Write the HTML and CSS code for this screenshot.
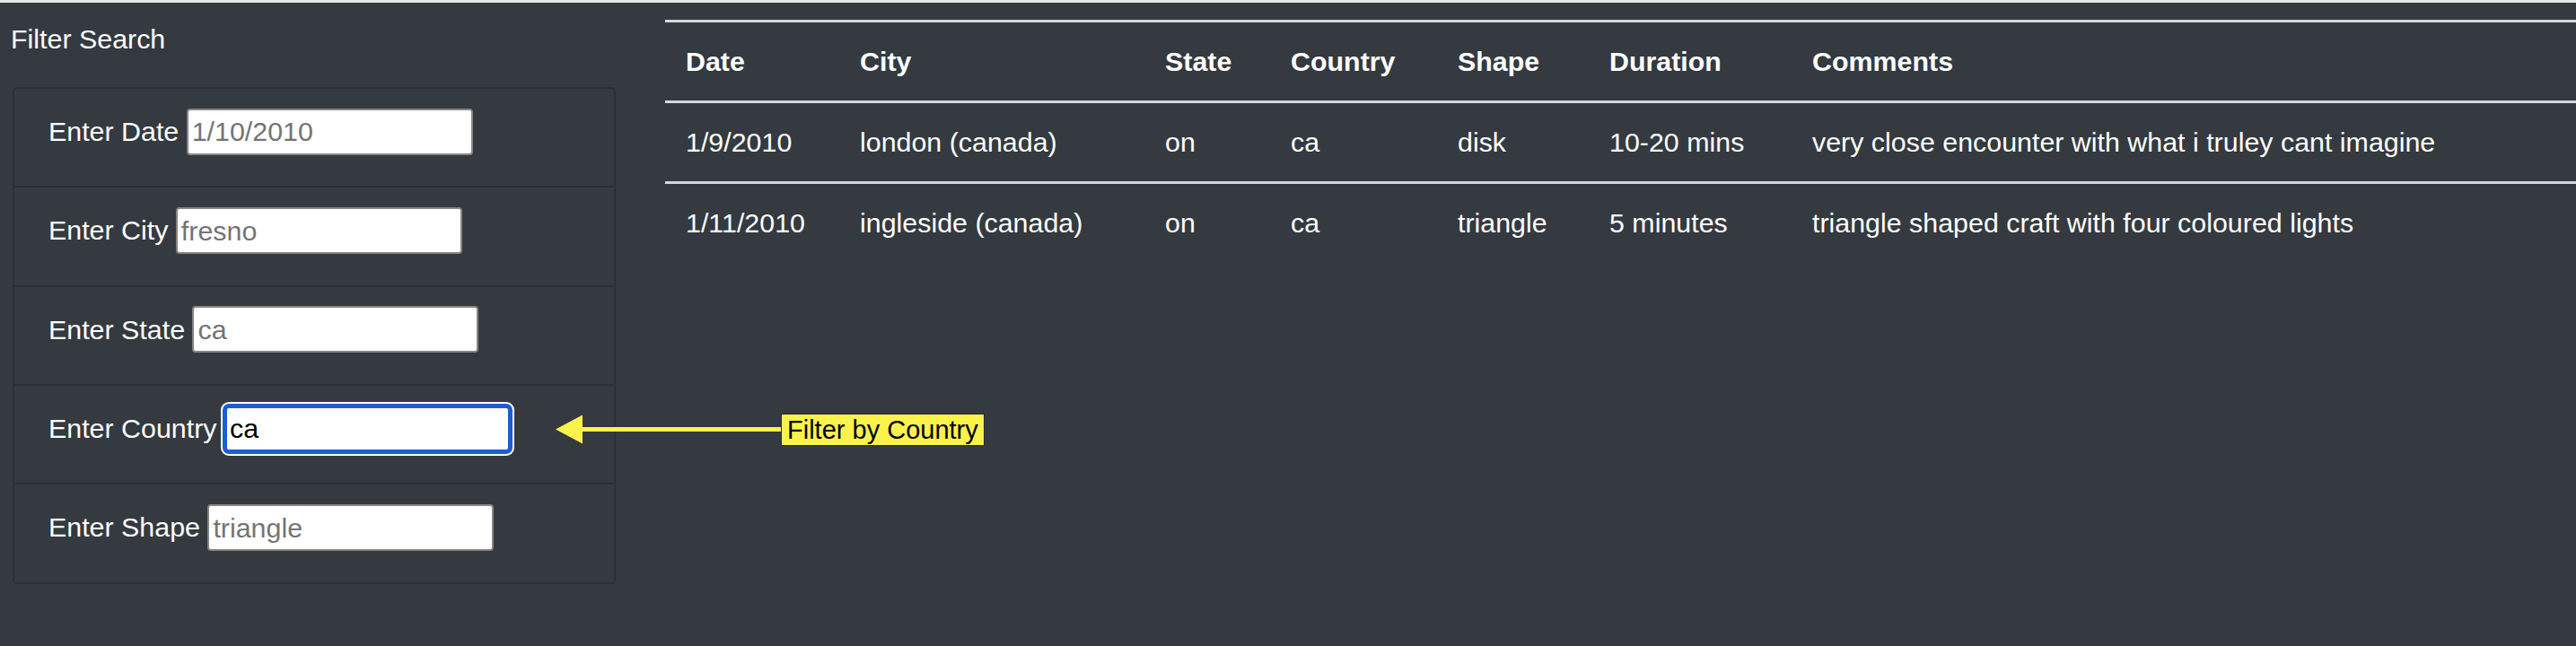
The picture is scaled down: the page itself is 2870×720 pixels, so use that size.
FILE: index.html
```html
<!DOCTYPE html>
<html lang="en">
<head>
<meta charset="utf-8">
<title>UFO Sightings Filter</title>
<link rel="stylesheet" href="styles.css">
</head>
<body>
<div class="top-strip"></div>
<div class="page">
  <aside class="sidebar">
    <h5 class="sidebar-title">Filter Search</h5>
    <ul class="filter-card">
      <li class="filter-item">
        <label class="filter-label" for="datetime">Enter Date</label>
        <input class="filter-input" id="datetime" type="text" placeholder="1/10/2010">
      </li>
      <li class="filter-item">
        <label class="filter-label" for="city">Enter City</label>
        <input class="filter-input" id="city" type="text" placeholder="fresno">
      </li>
      <li class="filter-item">
        <label class="filter-label" for="state">Enter State</label>
        <input class="filter-input" id="state" type="text" placeholder="ca">
      </li>
      <li class="filter-item">
        <label class="filter-label" for="country">Enter Country</label>
        <input class="filter-input is-focused" id="country" type="text" value="ca">
      </li>
      <li class="filter-item">
        <label class="filter-label" for="shape">Enter Shape</label>
        <input class="filter-input" id="shape" type="text" placeholder="triangle">
      </li>
    </ul>
  </aside>
  <main class="results">
    <table class="ufo-table">
      <colgroup>
        <col class="col-date">
        <col class="col-city">
        <col class="col-state">
        <col class="col-country">
        <col class="col-shape">
        <col class="col-duration">
        <col class="col-comments">
      </colgroup>
      <thead>
        <tr>
          <th>Date</th>
          <th>City</th>
          <th>State</th>
          <th>Country</th>
          <th>Shape</th>
          <th>Duration</th>
          <th>Comments</th>
        </tr>
      </thead>
      <tbody>
        <tr>
          <td>1/9/2010</td>
          <td>london (canada)</td>
          <td>on</td>
          <td>ca</td>
          <td>disk</td>
          <td>10-20 mins</td>
          <td>very close encounter with what i truley cant imagine</td>
        </tr>
        <tr>
          <td>1/11/2010</td>
          <td>ingleside (canada)</td>
          <td>on</td>
          <td>ca</td>
          <td>triangle</td>
          <td>5 minutes</td>
          <td>triangle shaped craft with four coloured lights</td>
        </tr>
      </tbody>
    </table>
  </main>
</div>
<div class="callout">
  <svg class="callout-arrow" width="251" height="37" viewBox="0 0 251 37" aria-hidden="true">
    <polygon points="0,18.5 30,2.5 30,34.5" fill="#fcf24c"/>
    <rect x="29" y="16" width="222" height="5" fill="#fcf24c"/>
  </svg>
  <span class="callout-label">Filter by Country</span>
</div>
</body>
</html>
```

FILE: styles.css
```css
* {
  box-sizing: border-box;
}

html, body {
  margin: 0;
  padding: 0;
}

body {
  position: relative;
  width: 2870px;
  height: 720px;
  overflow: hidden;
  background: #343a40;
  color: #fff;
  font-family: "Liberation Sans", Arial, Helvetica, sans-serif;
  font-size: 30.4px;
  line-height: 45.6px;
}

.top-strip {
  height: 3px;
  background: #e6e7e8;
}

.page {
  display: flex;
  align-items: flex-start;
}

/* ---------- sidebar ---------- */
.sidebar {
  flex: 0 0 686px;
  padding: 17.7px 0 0 12px;
}

.sidebar-title {
  margin: 0 0 30.7px 0;
  font-size: 30.4px;
  font-weight: 400;
  line-height: 45.6px;
}

.filter-card {
  list-style: none;
  margin: 0 0 0 2px;
  padding: 0;
  width: 672px;
  border: 2px solid rgba(0, 0, 0, 0.16);
  border-radius: 5px;
}

.filter-item {
  display: flex;
  align-items: center;
  gap: 8.45px;
  padding: 21.7px 38px 34.7px 38px;
}

.filter-item + .filter-item {
  border-top: 2px solid rgba(0, 0, 0, 0.16);
}

.filter-label {
  white-space: nowrap;
  line-height: 45.6px;
}

.filter-input {
  width: 319px;
  height: 52px;
  padding: 0 4px;
  border: 2px solid #868686;
  border-radius: 4px;
  background: #fff;
  color: #000;
  font-family: "Liberation Sans", Arial, Helvetica, sans-serif;
  font-size: 30.4px;
  outline: none;
}

.filter-input::placeholder {
  color: #747474;
  opacity: 1;
}

.filter-input.is-focused {
  border: 3px solid #1d5dd3;
  border-radius: 5px;
  padding: 0 3px;
  box-shadow: 0 0 0 2px #1d5dd3, 0 0 0 4px #ffffff;
}

/* ---------- table ---------- */
.results {
  flex: 1 1 auto;
  margin-left: 55px;
  padding-top: 19px;
}

.ufo-table {
  width: 100%;
  table-layout: fixed;
  border-collapse: collapse;
  color: #fff;
}

.col-date { width: 194px; }
.col-city { width: 340px; }
.col-state { width: 140px; }
.col-country { width: 186px; }
.col-shape { width: 169px; }
.col-duration { width: 226px; }

.ufo-table th,
.ufo-table td {
  padding: 20.7px 23px;
  border-top: 3px solid #d4d7da;
  text-align: left;
  vertical-align: top;
  white-space: nowrap;
  line-height: 45.6px;
}

.ufo-table th {
  font-weight: 700;
}

/* ---------- annotation ---------- */
.callout {
  position: absolute;
  left: 619px;
  top: 460px;
  display: flex;
  align-items: center;
  height: 37px;
}

.callout-arrow {
  display: block;
}

.callout-label {
  display: block;
  height: 36px;
  padding: 0 6px;
  border: 1px solid #2c2c24;
  background: #fcf24c;
  color: #000;
  font-size: 29px;
  line-height: 34px;
  white-space: nowrap;
}
```
